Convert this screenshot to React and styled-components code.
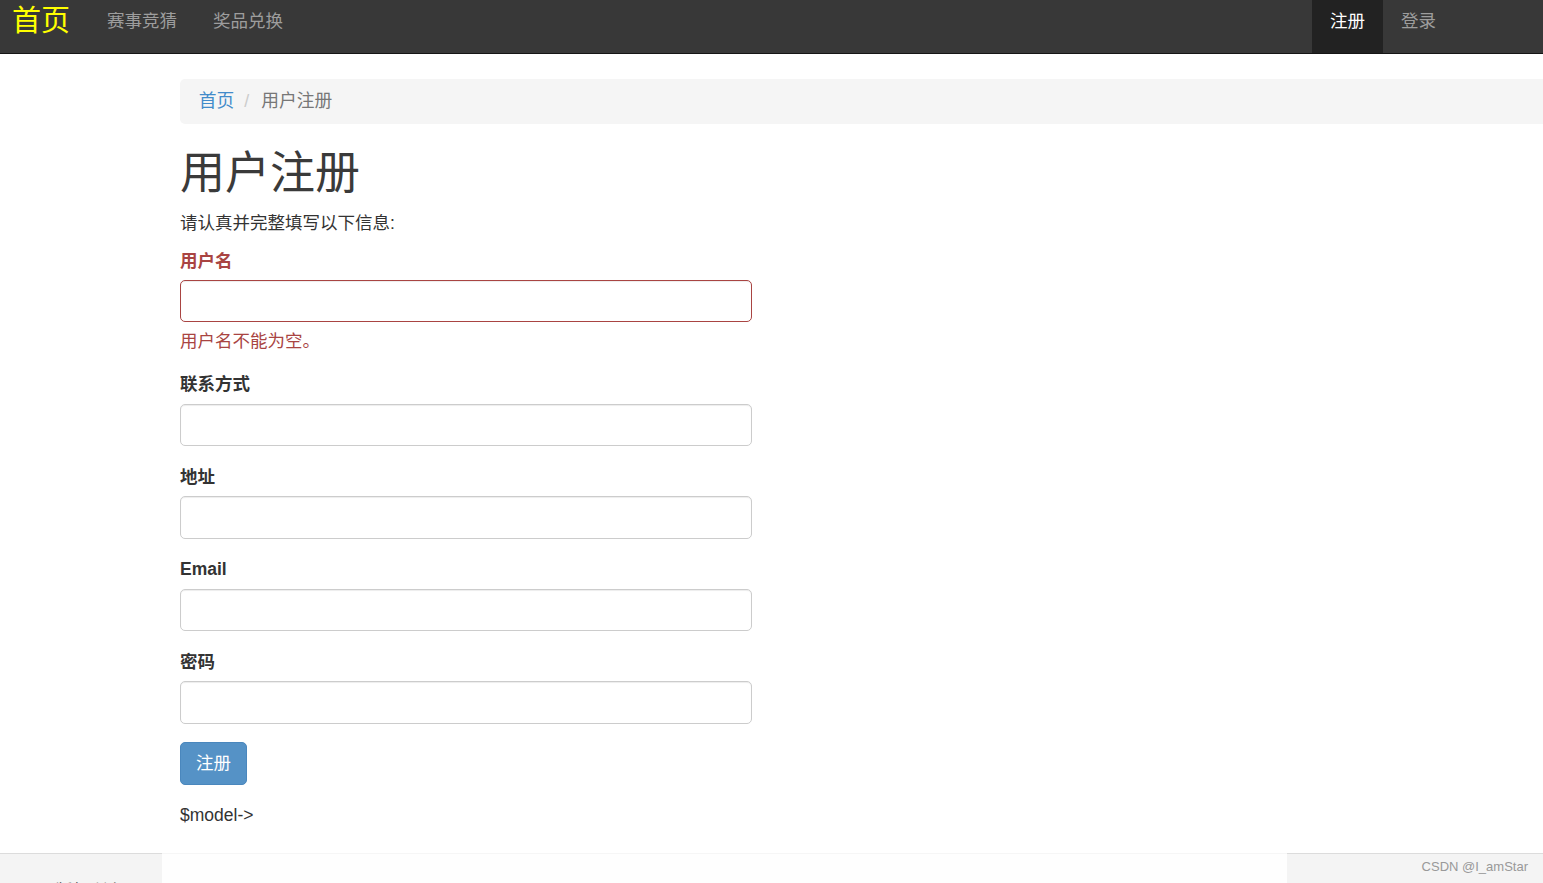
import React from "react";
import styled, { createGlobalStyle } from "styled-components";

const Global = createGlobalStyle`
  html, body { margin: 0; padding: 0; }
  body {
    font-family: "Liberation Sans", "Noto Sans CJK SC", Arial, sans-serif;
    font-size: 17.5px;
    line-height: 25px;
    color: #333;
    background: #fff;
  }
  #root { height: 883px; overflow: hidden; position: relative; }
  * { box-sizing: border-box; }
`;

const Page = styled.div`
  display: flex;
  flex-direction: column;
  height: 883px;
`;

const Navbar = styled.nav`
  height: 54px;
  background: #383838;
  border-bottom: 1px solid #151515;
  display: flex;
  justify-content: space-between;
  align-items: stretch;
  flex-shrink: 0;
`;

const NavGroup = styled.div`
  display: flex;
  align-items: stretch;
  padding-right: ${(p) => p.$pr || 0}px;
`;

const Brand = styled.a`
  color: #ffff00;
  font-size: 29px;
  line-height: 29px;
  padding: 7px 19px 0 12px;
  text-decoration: none;
`;

const NavLink = styled.a`
  color: ${(p) => (p.$active ? "#fff" : "#9d9d9d")};
  background: ${(p) => (p.$active ? "#222" : "transparent")};
  font-size: 17.5px;
  line-height: 25px;
  padding: 9px 18px 0;
  text-decoration: none;
`;

const Container = styled.main`
  padding-left: 180px;
  flex: 1;
`;

const Breadcrumb = styled.ol`
  list-style: none;
  margin: 25px 0 25px;
  padding: 10px 18.75px;
  background: #f5f5f5;
  border-radius: 5px 0 0 5px;
  display: flex;
  font-size: 17.75px;
`;

const Crumb = styled.li`
  color: ${(p) => (p.$active ? "#777" : "#428bca")};
`;

const Separator = styled.span`
  color: #ccc;
  padding: 0 9px 0 10px;
  margin-right: 3px;
`;

const Title = styled.h1`
  font-size: 45px;
  line-height: 49.5px;
  font-weight: 400;
  margin: 0 0 12.5px;
  color: #3a3a3a;
`;

const Intro = styled.p`
  margin: 0 0 12.5px;
`;

const Form = styled.form`
  width: 572px;
`;

const Group = styled.div`
  margin-bottom: 18.75px;
`;

const Label = styled.label`
  display: block;
  font-weight: 700;
  margin-bottom: 6.25px;
  color: ${(p) => (p.$error ? "#a94442" : "#333")};
`;

const Input = styled.input`
  display: block;
  width: 100%;
  height: 42.5px;
  padding: 7.5px 15px;
  font-size: 17.5px;
  border: 1px solid ${(p) => (p.$error ? "#a94442" : "#ccc")};
  border-radius: 5px;
  box-shadow: inset 0 1px 1px rgba(0, 0, 0, 0.075);
  background: #fff;
  outline: none;
`;

const Help = styled.div`
  color: #a94442;
  margin-top: 6.25px;
`;

const Button = styled.button`
  font-family: inherit;
  font-size: 17.5px;
  line-height: 25px;
  height: 42.5px;
  padding: 7.5px 15px;
  color: #fff;
  background: #5592c6;
  border: 1px solid #4a87bd;
  border-radius: 5px;
  cursor: pointer;
`;

const ModelText = styled.div`
  margin-top: 18px;
`;

const Footer = styled.footer`
  height: 30px;
  display: flex;
  flex-shrink: 0;
  position: relative;
`;

const FooterSide = styled.div`
  width: ${(p) => (p.$w ? `${p.$w}px` : "auto")};
  flex: ${(p) => (p.$w ? "none" : 1)};
  background: #f4f4f4;
  border-top: 1px solid #dcdcdc;
  padding-left: ${(p) => p.$pl || 0}px;
  overflow: hidden;
`;

const FooterMid = styled.div`
  width: 1125px;
  background: #fefefe;
  border-top: 1px solid #f6f6f6;
`;

const FooterText = styled.div`
  padding-top: 25px;
  color: #333;
  white-space: nowrap;
`;

const Watermark = styled.div`
  position: absolute;
  right: 15px;
  top: 5px;
  font-size: 13px;
  line-height: 18px;
  color: #999;
`;

export default function App() {
  return (
    <>
      <Global />
      <Page>
        <Navbar>
          <NavGroup>
            <Brand href="#">首页</Brand>
            <NavLink href="#">赛事竞猜</NavLink>
            <NavLink href="#">奖品兑换</NavLink>
          </NavGroup>
          <NavGroup $pr={89}>
            <NavLink href="#" $active>注册</NavLink>
            <NavLink href="#">登录</NavLink>
          </NavGroup>
        </Navbar>
        <Container>
          <Breadcrumb>
            <Crumb>首页</Crumb>
            <Separator>/</Separator>
            <Crumb $active>用户注册</Crumb>
          </Breadcrumb>
          <Title>用户注册</Title>
          <Intro>请认真并完整填写以下信息:</Intro>
          <Form onSubmit={(e) => e.preventDefault()}>
            <Group>
              <Label $error>用户名</Label>
              <Input $error type="text" />
              <Help>用户名不能为空。</Help>
            </Group>
            <Group>
              <Label>联系方式</Label>
              <Input type="text" />
            </Group>
            <Group>
              <Label>地址</Label>
              <Input type="text" />
            </Group>
            <Group>
              <Label>Email</Label>
              <Input type="text" />
            </Group>
            <Group>
              <Label>密码</Label>
              <Input type="password" />
            </Group>
            <Button type="submit">注册</Button>
          </Form>
          <ModelText>$model-&gt;</ModelText>
        </Container>
        <Footer>
          <FooterSide $w={162} $pl={55}>
            <FooterText>版权所有</FooterText>
          </FooterSide>
          <FooterMid />
          <FooterSide />
          <Watermark>CSDN @I_amStar</Watermark>
        </Footer>
      </Page>
    </>
  );
}
